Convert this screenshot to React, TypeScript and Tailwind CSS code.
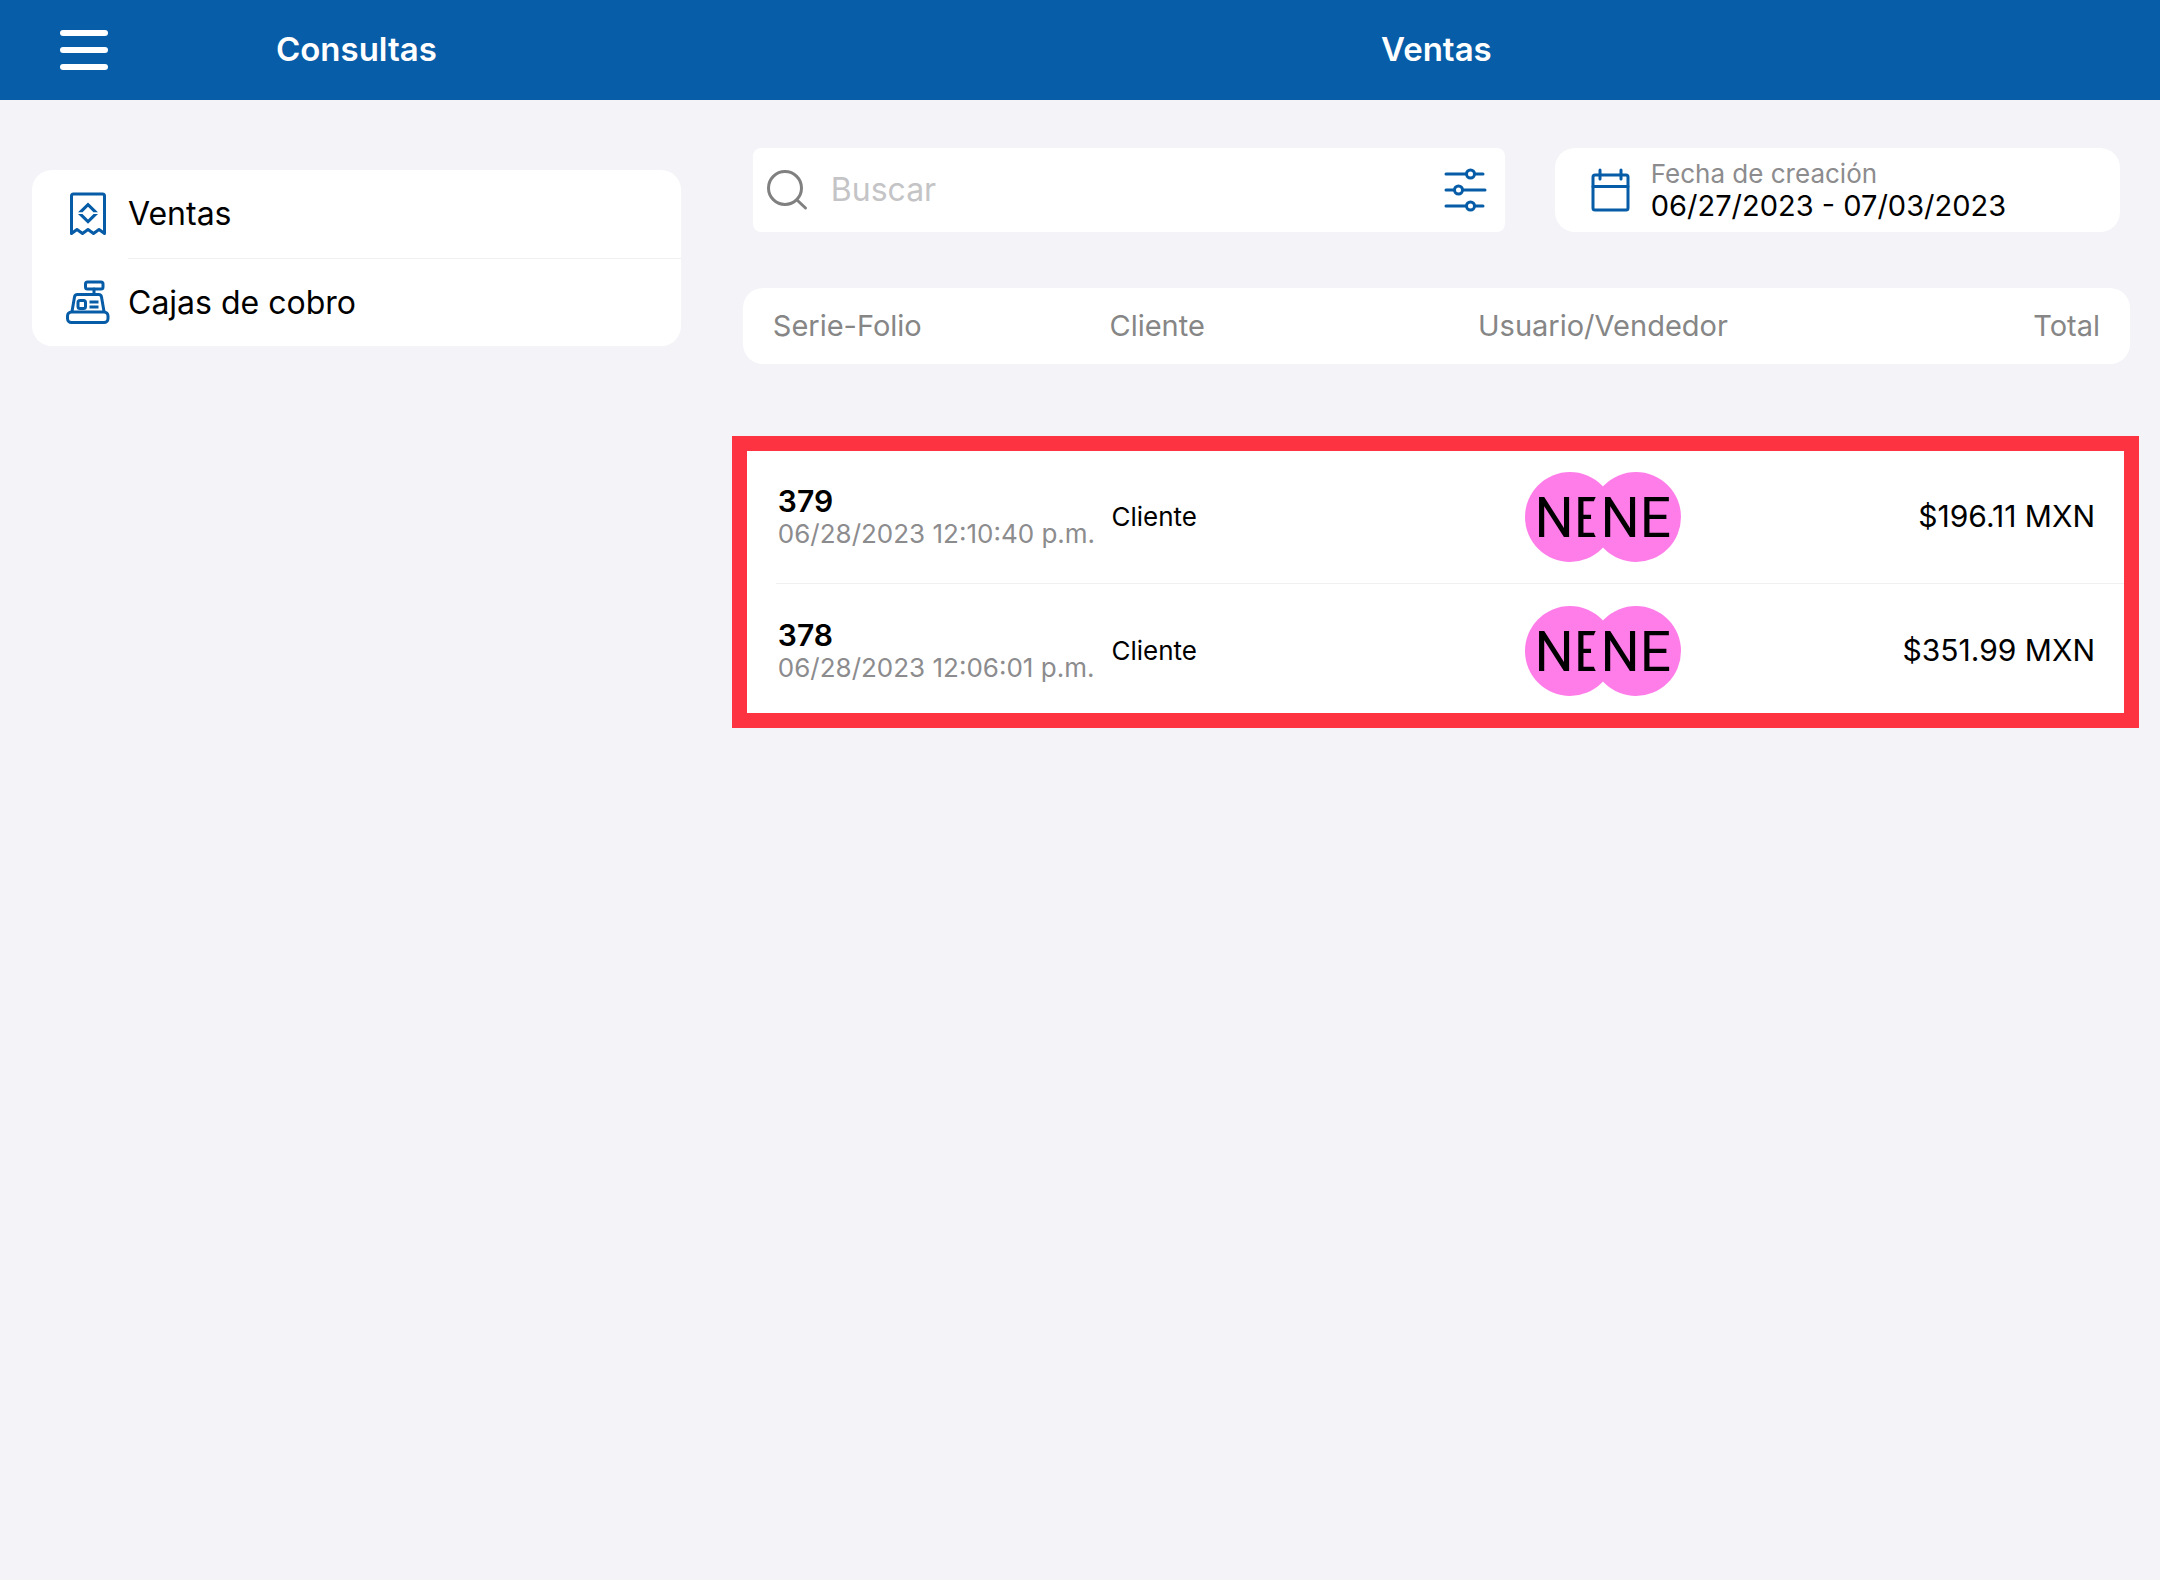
import { useState } from "react";

interface Sale {
    folio: string;
    date: string;
    client: string;
    users: string[];
    total: string;
}

const sales: Sale[] = [
    { folio: "379", date: "06/28/2023 12:10:40 p.m.", client: "Cliente", users: ["NE", "NE"], total: "$196.11 MXN" },
    { folio: "378", date: "06/28/2023 12:06:01 p.m.", client: "Cliente", users: ["NE", "NE"], total: "$351.99 MXN" },
];

const iconProps = {
    fill: "none",
    stroke: "currentColor",
    strokeWidth: 3,
    strokeLinecap: "round",
    strokeLinejoin: "round",
    "aria-hidden": true,
} as const;

function ReceiptIcon() {
    return (
        <svg width="44" height="44" viewBox="0 0 44 44" {...iconProps}>
            <path d="M5.5 41.5V4a2 2 0 0 1 2-2h29a2 2 0 0 1 2 2v37.5L33 37.5l-5.5 4-5.5-4-5.5 4-5.5-4z" />
            <path
                d="M12 20.2 22 10.5l10 9.700h-4.500L22 14.800l-5.500 5.400zM12 22l10 9.700L32 22h-4.500L22 27.400 16.500 22z"
                fill="currentColor"
                stroke="none"
            />
        </svg>
    );
}

function RegisterIcon() {
    return (
        <svg width="44" height="44" viewBox="0 0 44 44" {...iconProps}>
            <rect x="19.5" y="2" width="17.5" height="7" rx="2" />
            <path d="M28 9v5" />
            <path d="M6 31.5 8.5 17a3 3 0 0 1 3-2.5h21a3 3 0 0 1 3 2.5L38 31.5" />
            <rect x="12" y="20.5" width="7.5" height="8" rx="2" />
            <path d="M23.5 22h9M23.5 27h9" strokeLinecap="butt" />
            <rect x="1.5" y="32" width="40.5" height="10.5" rx="4" />
        </svg>
    );
}

function SearchIcon() {
    return (
        <svg width="44" height="44" viewBox="0 0 44 44" {...iconProps}>
            <circle cx="20" cy="20" r="16.5" />
            <path d="m32 32 8.5 8" />
        </svg>
    );
}

function FilterIcon() {
    return (
        <svg width="44" height="44" viewBox="0 0 44 44" {...iconProps}>
            <path d="M3 6h20M31.5 6H40M3 22h8.5M20 22h22M3 38h20M31.5 38H40" />
            <circle cx="27.5" cy="6" r="4" />
            <circle cx="15.5" cy="22" r="4" />
            <circle cx="27.5" cy="38" r="4" />
        </svg>
    );
}

function CalendarIcon() {
    return (
        <svg width="44" height="44" viewBox="0 0 44 44" {...iconProps}>
            <rect x="4" y="7" width="35" height="35" rx="2" />
            <path d="M4 18.5h35M11 2v9M32 2v9" />
        </svg>
    );
}

const menu = [
    { label: "Ventas", icon: <ReceiptIcon /> },
    { label: "Cajas de cobro", icon: <RegisterIcon /> },
];

function Sidebar() {
    return (
        <nav className="mx-8 mt-[70px] overflow-hidden rounded-[20px] bg-white">
            {menu.map((item, i) => (
                <a key={item.label} href="#" className="flex h-[88px] items-center pl-[34px] text-[#065ca7]">
                    {item.icon}
                    <span
                        className={`ml-[18px] flex h-full flex-1 items-center text-[32px] text-black ${
                            i > 0 ? "border-t border-[#f0f0f2]" : ""
                        }`}
                    >
                        {item.label}
                    </span>
                </a>
            ))}
        </nav>
    );
}

function Avatar({ initials }: { initials: string }) {
    return (
        <span className="flex size-[90px] items-center justify-center rounded-full bg-[#ff7de9] pt-1 font-['Roboto',sans-serif] text-[55px] leading-none not-first:-ml-6">
            {initials}
        </span>
    );
}

function SalesTable() {
    return (
        <div className="relative mt-14">
            <table className="w-full table-fixed border-separate border-spacing-0 text-[30px]">
                <thead>
                    <tr className="h-[76px] text-left text-[29px] text-[#868686] *:bg-white *:font-normal">
                        <th className="w-[26%] rounded-l-[20px] pl-[30px]">Serie-Folio</th>
                        <th className="w-[27%] pl-[6px]">Cliente</th>
                        <th className="w-[18%] text-center">Usuario/Vendedor</th>
                        <th className="w-[29%] rounded-r-[20px] pr-[30px] text-right">Total</th>
                    </tr>
                </thead>
                <tbody className="before:block before:h-[86px]">
                    {sales.map(sale => (
                        <tr key={sale.folio} className="group bg-white">
                            <td>
                                <div className="ml-[33px] flex h-[134px] flex-col justify-center border-b border-[#f0f0f2] whitespace-nowrap group-last:border-transparent">
                                    <span className="pl-[2px] font-semibold leading-[34px]">{sale.folio}</span>
                                    <span className="pl-[2px] text-[26px] leading-8 text-[#8c8c8e]">{sale.date}</span>
                                </div>
                            </td>
                            <td className="border-b border-[#f0f0f2] pl-2 text-[26px] group-last:border-transparent">{sale.client}</td>
                            <td className="border-b border-[#f0f0f2] group-last:border-transparent">
                                <div className="flex justify-center">
                                    {sale.users.map((user, i) => (
                                        <Avatar key={i} initials={user} />
                                    ))}
                                </div>
                            </td>
                            <td className="border-b border-[#f0f0f2] pr-[35px] text-right group-last:border-transparent">{sale.total}</td>
                        </tr>
                    ))}
                </tbody>
            </table>
            {/* highlight frame drawn over the list */}
            <div className="pointer-events-none absolute top-[148px] -right-[9px] -bottom-[10px] -left-[11px] border-[15px] border-[#fe3341]" />
        </div>
    );
}

export default function App() {
    const [query, setQuery] = useState("");

    return (
        <div className="min-h-screen bg-[#f3f3f8] font-['Inter',sans-serif] text-black">
            <header className="flex h-[100px] items-center bg-[#075da8] text-[33px] font-semibold text-white">
                <div className="relative w-[33%] text-center">
                    <button
                        type="button"
                        aria-label="Menú"
                        className="absolute inset-y-0 left-[60px] my-auto flex h-10 w-12 flex-col justify-between *:h-[6px] *:rounded-full *:bg-white"
                    >
                        <span />
                        <span />
                        <span />
                    </button>
                    <h1>Consultas</h1>
                </div>
                <h2 className="flex-1 text-center">Ventas</h2>
            </header>

            <div className="flex">
                <aside className="w-[33%]">
                    <Sidebar />
                </aside>

                <main className="flex-1 px-[30px] pt-12">
                    <div className="flex gap-[50px] px-[10px]">
                        <div className="flex h-[84px] w-[55%] items-center rounded-lg bg-white pr-[18px] pl-3 text-[#808080]">
                            <SearchIcon />
                            <input
                                type="text"
                                aria-label="Buscar"
                                placeholder="Buscar"
                                value={query}
                                onChange={e => setQuery(e.target.value)}
                                className="ml-[22px] min-w-0 flex-1 text-[32px] text-black outline-none placeholder:text-[#c4c4c6]"
                            />
                            <button type="button" aria-label="Filtros" className="text-[#065ca7]">
                                <FilterIcon />
                            </button>
                        </div>
                        <button
                            type="button"
                            className="flex h-[84px] flex-1 items-center rounded-[20px] bg-white pl-[34px] text-left text-[#065ca7]"
                        >
                            <CalendarIcon />
                            <span className="ml-[18px] flex flex-col">
                                <span className="text-[26px] leading-8 text-[#8c8c8e]">Fecha de creación</span>
                                <span className="text-[29px] leading-8 text-black">06/27/2023 - 07/03/2023</span>
                            </span>
                        </button>
                    </div>
                    <SalesTable />
                </main>
            </div>
        </div>
    );
}
